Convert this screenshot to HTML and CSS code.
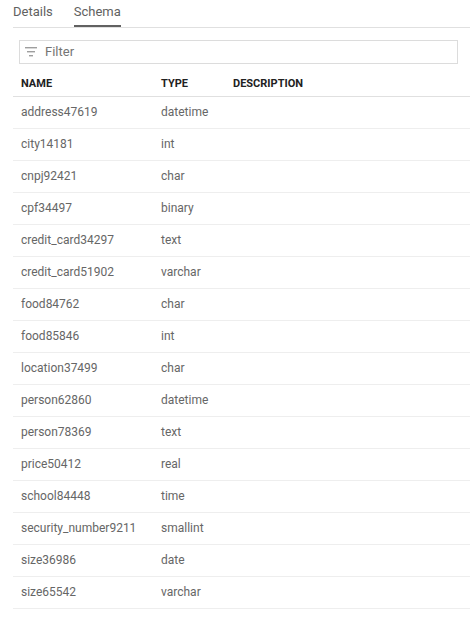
FILE: index.html
```html
<!DOCTYPE html>
<html>
<head>
<meta charset="utf-8">
<link rel="stylesheet" href="styles.css">
</head>
<body>
<div class="panel">
  <div class="tabs">
    <div class="tab">Details</div>
    <div class="tab active">Schema</div>
  </div>
  <div class="filter">
    <svg class="filter-icon" width="12" height="10" viewBox="0 0 12 10"><rect x="0" y="0" width="12" height="1.4" fill="#9e9e9e"/><rect x="2" y="4" width="8" height="1.4" fill="#9e9e9e"/><rect x="4" y="8" width="4" height="1.4" fill="#9e9e9e"/></svg>
    <span class="filter-text">Filter</span>
  </div>
  <div class="table">
    <div class="row head"><div class="c1">NAME</div><div class="c2">TYPE</div><div class="c3">DESCRIPTION</div></div>
    <div class="row"><div class="c1">address47619</div><div class="c2">datetime</div><div class="c3"></div></div>
    <div class="row"><div class="c1">city14181</div><div class="c2">int</div><div class="c3"></div></div>
    <div class="row"><div class="c1">cnpj92421</div><div class="c2">char</div><div class="c3"></div></div>
    <div class="row"><div class="c1">cpf34497</div><div class="c2">binary</div><div class="c3"></div></div>
    <div class="row"><div class="c1">credit_card34297</div><div class="c2">text</div><div class="c3"></div></div>
    <div class="row"><div class="c1">credit_card51902</div><div class="c2">varchar</div><div class="c3"></div></div>
    <div class="row"><div class="c1">food84762</div><div class="c2">char</div><div class="c3"></div></div>
    <div class="row"><div class="c1">food85846</div><div class="c2">int</div><div class="c3"></div></div>
    <div class="row"><div class="c1">location37499</div><div class="c2">char</div><div class="c3"></div></div>
    <div class="row"><div class="c1">person62860</div><div class="c2">datetime</div><div class="c3"></div></div>
    <div class="row"><div class="c1">person78369</div><div class="c2">text</div><div class="c3"></div></div>
    <div class="row"><div class="c1">price50412</div><div class="c2">real</div><div class="c3"></div></div>
    <div class="row"><div class="c1">school84448</div><div class="c2">time</div><div class="c3"></div></div>
    <div class="row"><div class="c1">security_number9211</div><div class="c2">smallint</div><div class="c3"></div></div>
    <div class="row"><div class="c1">size36986</div><div class="c2">date</div><div class="c3"></div></div>
    <div class="row"><div class="c1">size65542</div><div class="c2">varchar</div><div class="c3"></div></div>
  </div>
</div>
</body>
</html>
```
FILE: styles.css
```css
html, body {
  margin: 0;
  padding: 0;
  background: #fff;
}
body {
  font-family: Roboto, "Liberation Sans", sans-serif;
  color: #616161;
}
.panel {
  padding-left: 13px;
}
.tabs {
  display: flex;
  gap: 21px;
  height: 28px;
  border-bottom: 1px solid #e0e0e0;
  box-sizing: border-box;
}
.tab {
  font-size: 13px;
  line-height: 24px;
  height: 27px;
  box-sizing: border-box;
  color: #616161;
}
.tab.active {
  border-bottom: 2px solid #616161;
}
.filter {
  margin: 12px 12px 0 6px;
  height: 24px;
  border: 1px solid #dcdcdc;
  box-sizing: border-box;
  display: flex;
  align-items: center;
  padding-left: 5px;
  padding-bottom: 1px;
  gap: 8px;
}
.filter-icon {
  display: block;
  margin-top: 1px;
}
.filter-text {
  font-size: 13px;
  color: #757575;
}
.table {
  margin-top: 7px;
}
.row {
  display: flex;
  height: 32px;
  align-items: center;
  border-bottom: 1px solid #eeeeee;
  box-sizing: border-box;
  padding-bottom: 2px;
  font-size: 12px;
  color: #666666;
}
.row.head {
  height: 26px;
  padding-bottom: 0;
  border-bottom: 1px solid #e0e0e0;
  font-size: 11px;
  font-weight: 700;
  color: #212121;
}
.c1 {
  width: 140px;
  padding-left: 8px;
}
.c2 {
  width: 72px;
}
.c3 {
  flex: 1;
}
```
